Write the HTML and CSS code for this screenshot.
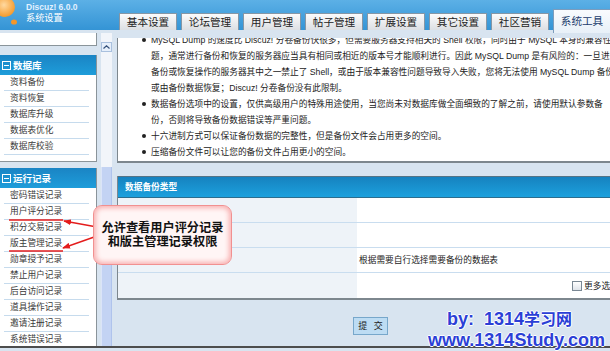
FILE: index.html
```html
<!DOCTYPE html>
<html lang="zh-CN">
<head>
    <meta charset="UTF-8">
    <title>Discuz! 系统设置</title>
    <link rel="stylesheet" href="styles.css">
</head>
<body>
<div class="page">
    <div class="topbar">
        <div class="brand">
            <svg class="logo" viewBox="0 0 22 30">
                <defs>
                    <radialGradient id="bulb" cx="0.45" cy="0.4" r="0.6">
                        <stop offset="0" stop-color="#ffd9a0"/>
                        <stop offset="1" stop-color="#f59a2c"/>
                    </radialGradient>
                </defs>
                <circle cx="5" cy="7" r="10" fill="url(#bulb)"/>
                <ellipse cx="14" cy="22" rx="3" ry="2.6" fill="#f3962a"/>
            </svg>
            <div class="brand-text">
                <div class="brand-name">Discuz! 6.0.0</div>
                <div class="brand-sub">系统设置</div>
            </div>
        </div>
        <div class="tabs">
            <div class="tab">基本设置</div>
            <div class="tab">论坛管理</div>
            <div class="tab">用户管理</div>
            <div class="tab">帖子管理</div>
            <div class="tab">扩展设置</div>
            <div class="tab">其它设置</div>
            <div class="tab">社区营销</div>
            <div class="tab active">系统工具</div>
        </div>
    </div>

    <div class="layout">
        <div class="sidebar">
            <div class="menu-top"></div>
            <div class="menu">
                <div class="menu-head">
                    <svg class="fold" viewBox="0 0 9 9"><rect x="0.5" y="0.5" width="8" height="8" fill="none" stroke="#fff"/><path d="M2 4.5h5" stroke="#fff"/></svg>
                    数据库
                </div>
                <ul>
                    <li>资料备份</li>
                    <li>资料恢复</li>
                    <li>数据库升级</li>
                    <li>数据表优化</li>
                    <li>数据库校验</li>
                </ul>
            </div>
            <div class="menu">
                <div class="menu-head">
                    <svg class="fold" viewBox="0 0 9 9"><rect x="0.5" y="0.5" width="8" height="8" fill="none" stroke="#fff"/><path d="M2 4.5h5" stroke="#fff"/></svg>
                    运行记录
                </div>
                <ul>
                    <li>密码错误记录</li>
                    <li>用户评分记录</li>
                    <li>积分交易记录</li>
                    <li>版主管理记录</li>
                    <li>勋章授予记录</li>
                    <li>禁止用户记录</li>
                    <li>后台访问记录</li>
                    <li>道具操作记录</li>
                    <li>邀请注册记录</li>
                    <li>系统错误记录</li>
                </ul>
            </div>
        </div>

        <div class="scrollbar">
            <div class="scroll-up">
                <svg viewBox="0 0 7 4" width="7" height="4"><path d="M0.5 3.5L3.5 0.8L6.5 3.5" fill="none" stroke="#34507a" stroke-width="1.2"/></svg>
            </div>
            <div class="scroll-thumb"><div class="grip"></div></div>
        </div>

        <div class="main">
            <div class="notes">
                <ul>
                    <li><span>MySQL Dump 的速度比 Discuz! 分卷备份快很多，但需要服务器支持相关的 Shell 权限，同时由于 MySQL 本身的兼容性问<br>题，通常进行备份和恢复的服务器应当具有相同或相近的版本号才能顺利进行。因此 MySQL Dump 是有风险的：一旦进行<br>备份或恢复操作的服务器其中之一禁止了 Shell，或由于版本兼容性问题导致导入失败，您将无法使用 MySQL Dump 备份<br>或由备份数据恢复；Discuz! 分卷备份没有此限制。</span></li>
                    <li><span>数据备份选项中的设置，仅供高级用户的特殊用途使用，当您尚未对数据库做全面细致的了解之前，请使用默认参数备<br>份，否则将导致备份数据错误等严重问题。</span></li>
                    <li><span>十六进制方式可以保证备份数据的完整性，但是备份文件会占用更多的空间。</span></li>
                    <li><span>压缩备份文件可以让您的备份文件占用更小的空间。</span></li>
                </ul>
            </div>

            <div class="table">
                <div class="thead">数据备份类型</div>
                <div class="row"><div class="label"></div><div class="value"></div></div>
                <div class="row"><div class="label"></div><div class="value"></div></div>
                <div class="row"><div class="label"></div><div class="value">根据需要自行选择需要备份的数据表</div></div>
                <div class="row last"><div class="label"></div><div class="value opt"><span class="check"></span>更多选项</div></div>
            </div>

            <div class="actions"><button class="btn">提 交</button></div>
        </div>
    </div>
    <div class="bottom-line"></div>

    <!-- 标注 -->
    <svg class="marks" viewBox="0 0 610 351">
        <defs>
            <marker id="head" markerWidth="8" markerHeight="6" refX="7" refY="3" orient="auto" markerUnits="userSpaceOnUse">
                <path d="M0 0L8 3L0 6z" fill="#e41c1c"/>
            </marker>
        </defs>
        <path d="M9 220H63M9 251H63" stroke="#e41c1c" stroke-width="1.3"/>
        <path d="M97 227L64 221" stroke="#e41c1c" stroke-width="1.4" marker-end="url(#head)"/>
        <path d="M97 236L63 248" stroke="#e41c1c" stroke-width="1.4" marker-end="url(#head)"/>
    </svg>
    <div class="callout">
        <div>允许查看用户评分记录</div>
        <div>和版主管理记录权限</div>
    </div>
    <div class="watermark">
        <div class="wm-line first">by:&nbsp;&nbsp;1314<span class="wm-cn">学习网</span></div>
        <div class="wm-line">www.1314Study.com</div>
    </div>
</div>
</body>
</html>
```

FILE: styles.css
```css
body {
    margin: 0;
    font-family: "Liberation Sans", "Noto Sans CJK SC", sans-serif;
    background-color: #d8e4f0;
}
.page {
    position: relative;
    width: 610px;
    height: 351px;
    overflow: hidden;
}

/* top bar */
.topbar {
    height: 30px;
    display: flex;
    background: linear-gradient(#5cb0e6, #3494d5);
}
.brand {
    width: 119px;
    flex: none;
    display: flex;
}
.logo {
    width: 22px;
    height: 30px;
    flex: none;
}
.brand-text {
    padding: 2px 0 0 4px;
    color: #fff;
}
.brand-name {
    font-size: 8.5px;
    font-weight: bold;
    line-height: 10px;
    color: #e2f1ff;
}
.brand-sub {
    font-size: 9.2px;
    line-height: 12px;
}
.tabs {
    display: flex;
    align-items: flex-end;
    gap: 4px;
}
.tab {
    width: 56px;
    height: 16px;
    border: 1px solid #8596a5;
    border-bottom: none;
    background: linear-gradient(#fbfbfb, #dcdfe3);
    font-size: 10.6px;
    line-height: 16px;
    text-align: center;
    color: #222;
    flex: none;
}
.tab.active {
    position: relative;
    height: 23px;
    line-height: 22px;
    margin-bottom: -3px;
    border-color: #7c9cbc;
    background: linear-gradient(#f9fbfe, #e8f0f8);
    color: #1b3b6c;
}

/* body */
.layout {
    display: flex;
    height: 313px;
    padding-top: 3px;
}
.sidebar {
    width: 101px;
    flex: none;
    overflow: hidden;
}
.menu-top {
    width: 96px;
    height: 12px;
    background: #fff;
    border-right: 1px solid #8a949a;
    border-bottom: 1px solid #8a949a;
    margin-bottom: 9px;
}
.menu {
    width: 96px;
    background: #fff;
    border-right: 1px solid #8a949a;
    border-bottom: 1px solid #8a949a;
    padding-bottom: 6px;
    margin-bottom: 6px;
}
.menu-head {
    height: 20px;
    display: flex;
    align-items: center;
    gap: 2px;
    padding-left: 2px;
    background: linear-gradient(#1a84c4, #1e9dda);
    color: #fff;
    font-size: 9.5px;
    font-weight: bold;
}
.fold {
    width: 9px;
    height: 9px;
    flex: none;
}
.menu ul {
    list-style: none;
    margin: 0;
    padding: 0 7px 0 4px;
}
.menu li {
    height: 15px;
    line-height: 15px;
    border-bottom: 1px solid #c6dbed;
    padding-left: 6px;
    font-size: 8.7px;
    color: #3a3a3a;
}

.scrollbar {
    width: 11px;
    flex: none;
    display: flex;
    flex-direction: column;
    background: #f2f5fa;
}
.scroll-up {
    height: 8px;
    margin-top: 9px;
    border: 1px solid #a9c0de;
    background: #e6effb;
    display: flex;
    align-items: center;
    justify-content: center;
}
.scroll-thumb {
    flex: 1;
    margin-top: 115px;
    background: #c3d3f3;
    border-left: 1px solid #dbe4f8;
    border-right: 1px solid #afc3ec;
}
.grip {
    width: 5px;
    height: 5px;
    margin: 82px auto 0;
    border-top: 1px solid #e4ebfa;
    border-bottom: 1px solid #e4ebfa;
}

.main {
    flex: 1;
    margin: 5px 0 0 5px;
    overflow: hidden;
}
.notes {
    margin-top: -6px;
    padding-bottom: 1px;
    background: #fff;
    border-left: 1px solid #7d878e;
    border-bottom: 2px solid #7d878e;
}
.notes ul {
    list-style: none;
    margin: 0;
    padding: 0 0 0 24px;
    font-size: 8.7px;
    line-height: 16px;
    color: #222;
    white-space: nowrap;
}
.notes li {
    display: flex;
}
.notes li::before {
    content: "";
    flex: none;
    width: 4px;
    height: 4px;
    margin: 6px 5px 0 0;
    border-radius: 50%;
    background: #222;
}

.table {
    margin-top: 13px;
    background: #fff;
    border-left: 1px solid #7d878e;
    border-bottom: 2px solid #7d878e;
}
.thead {
    height: 20px;
    line-height: 20px;
    padding-left: 7px;
    border-top: 1px solid #557486;
    border-bottom: 1px solid #2b6d8e;
    background: linear-gradient(#1682bf, #1ca0dd);
    color: #fff;
    font-size: 8.7px;
    font-weight: bold;
}
.row {
    display: grid;
    grid-template-columns: 239px 1fr;
    height: 24px;
    border-bottom: 1px solid #c9ddef;
}
.row.last {
    height: 25px;
    border-bottom: none;
}
.label {
    background: #eef3f8;
}
.value {
    padding-left: 2px;
    font-size: 8.7px;
    line-height: 24px;
    color: #222;
    white-space: nowrap;
}
.opt {
    display: flex;
    align-items: center;
    gap: 2px;
    padding-left: 215px;
}
.check {
    width: 8px;
    height: 8px;
    flex: none;
    border: 1px solid #7a8894;
    background: linear-gradient(#fff, #dfe4ea);
}

.actions {
    padding: 15px 0 0 236px;
}
.btn {
    width: 35px;
    height: 18px;
    padding: 0 0 0 2px;
    border: 1px solid #77a7cb;
    background: #bddcf3;
    font-family: "Liberation Sans", "Noto Sans CJK SC", sans-serif;
    font-size: 9px;
    letter-spacing: 2px;
    color: #222;
}

.bottom-line {
    height: 2px;
    background: #4d4d4d;
}

/* annotation */
.marks {
    position: absolute;
    left: 0;
    top: 0;
    width: 610px;
    height: 351px;
    pointer-events: none;
}
.callout {
    position: absolute;
    left: 93px;
    top: 205px;
    width: 139px;
    height: 60px;
    box-sizing: border-box;
    border: 1px solid #f19090;
    border-radius: 9px;
    background: #fff5f5;
    box-shadow: inset 0 0 5px 2px #f8b0b0;
    display: flex;
    flex-direction: column;
    justify-content: center;
    align-items: center;
    font-size: 12.2px;
    font-weight: bold;
    line-height: 14px;
    color: #111;
}
.watermark {
    position: absolute;
    left: 428px;
    top: 309px;
    font-size: 18px;
    font-weight: bold;
    line-height: 21px;
    color: #2b3fd6;
    white-space: nowrap;
    text-shadow: 1px 0 #fff, -1px 0 #fff, 0 1px #fff, 0 -1px #fff;
}
.wm-line {
    height: 21px;
}
.wm-line.first {
    padding-left: 19px;
}
.wm-cn {
    font-size: 16px;
}
```
